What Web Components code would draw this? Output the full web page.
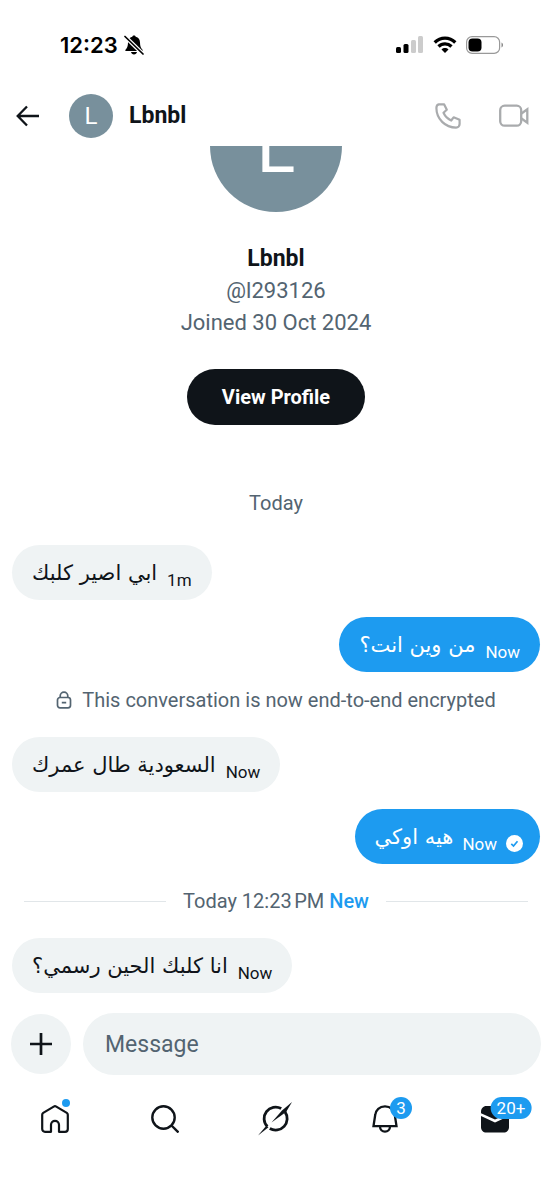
<!DOCTYPE html>
<html lang="en">
<head>
<meta charset="utf-8">
<meta name="viewport" content="width=device-width, initial-scale=1">
<title>Lbnbl – Messages</title>
<style>
  :root {
    --ink: #0f1419;
    --muted: #536471;
    --accent: #1d9bf0;
    --surface: #eff3f4;
    --slate: #78909c;
    --ui: Roboto, "Liberation Sans", sans-serif;
  }
  body { margin: 0; background: #fff; color: var(--ink); font-family: var(--ui); }
</style>
</head>
<body>
<chat-app></chat-app>

<script>
const define = (name, html, setup) => {
  const template = document.createElement('template');
  template.innerHTML = '<style>*{box-sizing:border-box}svg{display:block}</style>' + html;
  customElements.define(name, class extends HTMLElement {
    constructor() {
      super();
      this.attachShadow({ mode: 'open' }).append(template.content.cloneNode(true));
    }
    connectedCallback() { if (setup) setup(this, this.shadowRoot); }
  });
};

define('status-bar', `
  <style>
    :host { display: flex; align-items: center; justify-content: space-between; height: 90px; padding: 0 48px 0 60px; color: #000; }
    div { display: flex; align-items: center; gap: 9px; }
    .time { gap: 6px; }
    time { font: 600 22px/24px Inter, sans-serif; }
  </style>
  <div class="time"><time>12:23</time>
    <svg width="20" height="22" viewBox="0 0 20 22" aria-label="Silent">
      <path d="M10 1.500c-.9 0-1.500.5-1.700 1.300C5.500 3.500 4 5.800 4 8.500c0 4-1 5.500-2.500 7.200-.4.500-.2 1.300.5 1.300h16c.7 0 .9-.8.5-1.300C17 14 16 12.500 16 8.500c0-2.700-1.500-5-4.300-5.700-.2-.8-.8-1.300-1.700-1.300zM7 18c.3 1.500 1.500 2.500 3 2.500s2.700-1 3-2.500z"/>
      <path d="M1 2.500l18 17.500" stroke="#fff" stroke-width="4"/><path d="M1 2.500l18 17.500" stroke="#000" stroke-width="1.700" stroke-linecap="round"/>
    </svg>
  </div>
  <div>
    <svg width="28" height="18" viewBox="0 0 28 18" aria-label="Signal">
      <rect x="0" y="11" width="5" height="6" rx="1.500"/><rect x="7.500" y="8" width="5" height="9" rx="1.500"/>
      <g fill="#ccc"><rect x="15" y="4" width="5" height="13" rx="1.500"/><rect x="22" y="0" width="5" height="17" rx="1.500"/></g>
    </svg>
    <svg width="24" height="18" viewBox="0 0 24 18" fill="none" stroke="#000" stroke-width="3.300" aria-label="Wi-Fi">
      <path d="M1.700 6.500C7.500.7 16.500.7 22.300 6.500M5.500 10.500c3.700-3.600 9.300-3.600 13 0"/><path d="M8.500 13.400c2-1.900 5-1.900 7 0L12 17z" fill="#000" stroke="none"/>
    </svg>
    <svg width="38" height="18" viewBox="0 0 38 18" aria-label="Battery">
      <rect x=".6" y=".6" width="33" height="16.800" rx="5.500" fill="none" stroke="#999" stroke-width="1.200"/>
      <rect x="2.500" y="2.500" width="13" height="13" rx="4"/><path d="M35.500 6.500c2 .8 2 4.200 0 5z" fill="#888"/>
    </svg>
  </div>`);

define('user-avatar', `
  <style>
    :host { display: grid; place-items: center; width: 44px; height: 44px; border-radius: 50%; background: var(--slate); color: #fff; font: 400 24px/1 Roboto, sans-serif; flex: none; }
    :host([size="large"]) { width: 132px; height: 132px; padding-top: 4px; font-size: 72px; }
    :host { box-sizing: border-box; }
  </style><slot></slot>`);

define('chat-header', `
  <style>
    :host { display: block; }
    header { display: flex; align-items: center; height: 56px; padding: 0 23px 5px 16px; }
    button { padding: 0; border: 0; background: none; color: inherit; }
    h1 { flex: 1; margin: 0 0 0 16px; font: 700 23px/28px var(--ui); }
    user-avatar { margin-left: 29px; }
    .call { margin-right: 38px; }
  </style>
  <header>
    <button aria-label="Back"><svg width="24" height="24" viewBox="0 0 24 24" fill="none" stroke="currentColor" stroke-width="2.300"><path d="M23 12H2M11 2.500L1.700 12l9.300 9.500"/></svg></button>
    <user-avatar>L</user-avatar>
    <h1><slot></slot></h1>
    <button class="call" aria-label="Call"><svg width="26" height="26" viewBox="0 0 26 26" fill="none" stroke="#a9abad" stroke-width="2.200" stroke-linejoin="round"><path d="M3.800 1.400h5.400l2.600 5.300-3.300 3.100c1.500 3.400 4.200 6.100 7.700 7.700l2.400-3.200 6 2.500V21c0 2-1.500 3.600-3.500 3.600C10.200 24.600 1.400 15.800 1.400 5c0-1.700.6-3.200 2.400-3.600z"/></svg></button>
    <button aria-label="Video call"><svg width="30" height="24" viewBox="0 0 30 24" fill="none" stroke="#a9abad" stroke-width="2.300"><rect x="1.200" y="1.700" width="21" height="20" rx="4.500"/><path d="M22.500 9.500l5.800-4.200v13.400l-5.800-4.200"/></svg></button>
  </header>`);

define('profile-card', `
  <style>
    :host { display: flex; flex-direction: column; align-items: center; text-align: center; }
    user-avatar { margin-top: -66px; }
    h2, p { margin: 0; font: 400 22px/32px var(--ui); }
    h2 { margin-top: 31px; font-weight: 700; font-size: 23px; }
    p { color: var(--muted); }
    button { height: 56px; margin-top: 30px; padding: 0 35px; border: 0; border-radius: 28px; background: var(--ink); color: #fff; font: 700 20px/24px var(--ui); }
  </style>
  <user-avatar size="large">L</user-avatar>
  <h2><slot name="name"></slot></h2>
  <p><slot name="handle"></slot></p>
  <p><slot name="joined"></slot></p>
  <button>View Profile</button>`);

define('chat-note', `
  <style>
    :host { display: flex; align-items: center; justify-content: center; gap: 10px; color: var(--muted); font: 400 20px/24px var(--ui); }
    :host([rule]) { gap: 17px; padding: 0 12px; }
    :host([rule])::before, :host([rule])::after { content: ""; flex: 1; height: 1px; background: #e1e6e9; }
    svg { display: none; }
    :host([locked]) svg { display: block; }
  </style>
  <svg width="16" height="18" viewBox="0 0 16 18" fill="none" stroke="currentColor" stroke-width="1.700"><rect x="1.500" y="6.500" width="13" height="10.300" rx="2.500"/><path d="M4.200 6.500V5a3.800 3.800 0 0 1 7.600 0v1.500M5.800 11.700h4.400"/></svg>
  <span><slot></slot></span>`);

define('chat-message', `
  <style>
    :host { display: flex; }
    :host([own]) { justify-content: flex-end; }
    div { display: flex; align-items: center; gap: 10px; height: 55px; padding: 0 20px; border-radius: 28px; background: var(--surface); }
    :host([own]) div { background: var(--accent); color: #fff; }
    :host([sent]) div { gap: 9px; padding-right: 17px; }
    p { margin: 0; font: 400 21px/32px "DejaVu Sans", sans-serif; }
    time { padding-top: 14px; font: 400 17px/20px var(--ui); }
    svg { display: none; margin-top: 14px; }
    :host([sent]) svg { display: block; }
  </style>
  <div><p dir="rtl" lang="ar"><slot></slot></p><time></time>
    <svg width="17" height="17" viewBox="0 0 17 17" aria-label="Sent"><circle cx="8.500" cy="8.500" r="8.500" fill="#fff"/><path d="M5.300 8.900l2.200 2.100 4-4.800" fill="none" stroke="#1d9bf0" stroke-width="1.700"/></svg></div>`,
  (host, root) => { root.querySelector('time').textContent = host.getAttribute('time'); });

define('message-composer', `
  <style>
    :host { display: block; }
    form { display: flex; align-items: center; gap: 12px; padding: 0 11px; }
    button { display: grid; place-items: center; flex: none; width: 60px; height: 60px; padding: 0; border: 0; border-radius: 50%; background: var(--surface); color: var(--ink); }
    label { flex: 1; display: flex; min-width: 0; }
    input { width: 100%; height: 62px; padding: 0 22px; border: 0; border-radius: 31px; background: var(--surface); color: var(--ink); font: 400 23px/28px var(--ui); }
    input::placeholder { color: var(--muted); opacity: 1; }
  </style>
  <form>
    <button type="button" aria-label="Add attachment"><svg width="22" height="22" viewBox="0 0 22 22" stroke="currentColor" stroke-width="2.700"><path d="M11 0v22M0 11h22"/></svg></button>
    <label><input type="text" placeholder="Message" aria-label="Message"></label>
  </form>`);

define('nav-item', `
  <style>
    :host { display: flex; flex: 1; justify-content: center; }
    a { position: relative; display: grid; place-items: center; width: 34px; height: 34px; color: var(--ink); text-decoration: none; }
    .badge { position: absolute; left: 33px; top: -5px; transform: translateX(-50%); min-width: 22px; height: 22px; padding: 0 6px; border-radius: 11px; background: var(--accent); color: #fff; font: 400 17px/22px var(--ui); text-align: center; }
    .badge:empty { display: none; }
    .dot { position: absolute; left: 24px; top: -3px; width: 8px; height: 8px; border-radius: 50%; background: var(--accent); }
    :host(:not([dot])) .dot { display: none; }
  </style>
  <a href="#"><slot></slot><span class="dot"></span><span class="badge"></span></a>`,
  (host, root) => {
    root.querySelector('a').setAttribute('aria-label', host.getAttribute('name'));
    root.querySelector('.badge').textContent = host.getAttribute('badge') || '';
  });

define('tab-bar', `
  <style>
    :host { display: block; }
    nav { display: flex; padding: 27px 2px 64px 0; }
  </style>
  <nav aria-label="Primary">
    <nav-item name="Home" dot><svg width="28" height="28" viewBox="0 0 28 28" fill="none" stroke="currentColor" stroke-width="2.200" stroke-linejoin="round"><path d="M1.200 9.800c0-.8.400-1.500 1-1.900L12.700 1.600c.8-.5 1.800-.5 2.600 0l10.500 6.300c.6.400 1 1.100 1 1.900V24a2.800 2.800 0 0 1-2.800 2.800h-6v-7a4 4 0 0 0-8 0v7H4A2.800 2.800 0 0 1 1.200 24z"/></svg></nav-item>
    <nav-item name="Search"><svg width="28" height="28" viewBox="0 0 28 28" fill="none" stroke="currentColor" stroke-width="2.400"><circle cx="12.500" cy="12.500" r="11.200"/><path d="M20.500 20.500l7 7"/></svg></nav-item>
    <nav-item name="Grok"><svg width="34" height="34" viewBox="0 0 34 34" fill="currentColor"><g fill="none" stroke="currentColor" stroke-width="2.800"><path d="M9.400 24.600A11.500 11.500 0 0 1 23.200 6.500M27 9.900A11.500 11.500 0 0 1 11.800 26.500"/></g><path d="M34 0L24 8.500 13.500 20.500 25.600 11.700 28.400 9.500z"/><path d="M0 33.500L8.300 23.700 10.500 25.200z"/></svg></nav-item>
    <nav-item name="Notifications" badge="3"><svg width="26" height="28" viewBox="0 0 26 28" fill="none" stroke="currentColor" stroke-width="2.300"><path d="M13 1.400C7.500 1.400 3.700 5 3.200 10L1.500 21.200h23L22.800 10C22.300 5 18.500 1.400 13 1.400zM8 21.500c0 3 2.200 5.200 5 5.200s5-2.200 5-5.200"/></svg></nav-item>
    <nav-item name="Messages" badge="20+"><svg width="28" height="28" viewBox="0 0 28 28" fill="currentColor"><path d="M0 6.500C0 3.500 2.300 1 5.300 1h17.400C25.700 1 28 3.500 28 6.500v1.700l-14 6.300L0 8.200z"/><path d="M0 11l14 6.500L28 11v11.200c0 3-2.300 5.300-5.300 5.300H5.300C2.300 27.500 0 25.200 0 22.200z"/></svg></nav-item>
  </nav>`);

define('chat-app', `
  <style>
    :host { display: flex; flex-direction: column; min-height: 100vh; }
    main { flex: 1; overflow: hidden; padding: 0 12px 20px; }
    .day { margin: 66px 0 30px; }
    chat-message + chat-message { margin-top: 17px; }
    .lock { margin: 16px 0 25px; }
    .new { margin: 25px 0; }
    b { color: var(--accent); font-weight: 500; }
  </style>
  <status-bar></status-bar>
  <chat-header>Lbnbl</chat-header>
  <main>
    <profile-card><span slot="name">Lbnbl</span><span slot="handle">@l293126</span><span slot="joined">Joined 30 Oct 2024</span></profile-card>
    <chat-note class="day">Today</chat-note>
    <chat-message time="1m">ابي اصير كلبك</chat-message>
    <chat-message own time="Now">من وين انت؟</chat-message>
    <chat-note class="lock" locked>This conversation is now end-to-end encrypted</chat-note>
    <chat-message time="Now">السعودية طال عمرك</chat-message>
    <chat-message own sent time="Now">هيه اوكي</chat-message>
    <chat-note class="new" rule>Today 12:23&#8239;PM <b>New</b></chat-note>
    <chat-message time="Now">انا كلبك الحين رسمي؟</chat-message>
  </main>
  <message-composer></message-composer>
  <tab-bar></tab-bar>`);
</script>
</body>
</html>
